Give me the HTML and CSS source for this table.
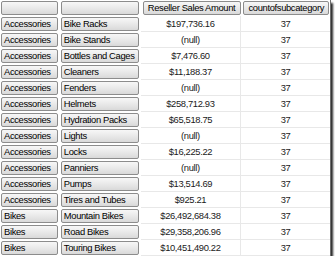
FILE: index.html
```html
<!DOCTYPE html>
<html>
<head>
<meta charset="utf-8">
<link rel="stylesheet" href="styles.css">
</head>
<body>
<div class="frame">
  <div class="row head">
    <div class="c1"><div class="btn"></div></div>
    <div class="c2"><div class="btn"></div></div>
    <div class="c3"><div class="btn center">Reseller Sales Amount</div></div>
    <div class="c4"><div class="btn center">countofsubcategory</div></div>
  </div>
  <div class="row"><div class="c1"><div class="btn">Accessories</div></div><div class="c2"><div class="btn">Bike Racks</div></div><div class="c3 val">$197,736.16</div><div class="c4 val">37</div></div>
  <div class="row"><div class="c1"><div class="btn">Accessories</div></div><div class="c2"><div class="btn">Bike Stands</div></div><div class="c3 val">(null)</div><div class="c4 val">37</div></div>
  <div class="row"><div class="c1"><div class="btn">Accessories</div></div><div class="c2"><div class="btn">Bottles and Cages</div></div><div class="c3 val">$7,476.60</div><div class="c4 val">37</div></div>
  <div class="row"><div class="c1"><div class="btn">Accessories</div></div><div class="c2"><div class="btn">Cleaners</div></div><div class="c3 val">$11,188.37</div><div class="c4 val">37</div></div>
  <div class="row"><div class="c1"><div class="btn">Accessories</div></div><div class="c2"><div class="btn">Fenders</div></div><div class="c3 val">(null)</div><div class="c4 val">37</div></div>
  <div class="row"><div class="c1"><div class="btn">Accessories</div></div><div class="c2"><div class="btn">Helmets</div></div><div class="c3 val">$258,712.93</div><div class="c4 val">37</div></div>
  <div class="row"><div class="c1"><div class="btn">Accessories</div></div><div class="c2"><div class="btn">Hydration Packs</div></div><div class="c3 val">$65,518.75</div><div class="c4 val">37</div></div>
  <div class="row"><div class="c1"><div class="btn">Accessories</div></div><div class="c2"><div class="btn">Lights</div></div><div class="c3 val">(null)</div><div class="c4 val">37</div></div>
  <div class="row"><div class="c1"><div class="btn">Accessories</div></div><div class="c2"><div class="btn">Locks</div></div><div class="c3 val">$16,225.22</div><div class="c4 val">37</div></div>
  <div class="row"><div class="c1"><div class="btn">Accessories</div></div><div class="c2"><div class="btn">Panniers</div></div><div class="c3 val">(null)</div><div class="c4 val">37</div></div>
  <div class="row"><div class="c1"><div class="btn">Accessories</div></div><div class="c2"><div class="btn">Pumps</div></div><div class="c3 val">$13,514.69</div><div class="c4 val">37</div></div>
  <div class="row"><div class="c1"><div class="btn">Accessories</div></div><div class="c2"><div class="btn">Tires and Tubes</div></div><div class="c3 val">$925.21</div><div class="c4 val">37</div></div>
  <div class="row"><div class="c1"><div class="btn">Bikes</div></div><div class="c2"><div class="btn">Mountain Bikes</div></div><div class="c3 val">$26,492,684.38</div><div class="c4 val">37</div></div>
  <div class="row"><div class="c1"><div class="btn">Bikes</div></div><div class="c2"><div class="btn">Road Bikes</div></div><div class="c3 val">$29,358,206.96</div><div class="c4 val">37</div></div>
  <div class="row"><div class="c1"><div class="btn">Bikes</div></div><div class="c2"><div class="btn">Touring Bikes</div></div><div class="c3 val">$10,451,490.22</div><div class="c4 val">37</div></div>
</div>
</body>
</html>
```
FILE: styles.css
```css
html, body {
  margin: 0;
  padding: 0;
  background: #ffffff;
}
body {
  font-family: "Liberation Sans", Arial, sans-serif;
  font-size: 9.4px;
  letter-spacing: -0.35px;
  color: #000000;
}
.frame {
  width: 330px;
  height: 256px;
  background: #ffffff;
  border-right: 1px solid #6e6e6e;
  box-shadow: 2px 3px 2px rgba(0, 0, 0, 0.85);
  overflow: hidden;
}
.row {
  display: flex;
  height: 16px;
}
.c1, .c2, .c3, .c4 {
  display: flex;
  align-items: center;
  box-sizing: border-box;
}
.c1 { width: 60px; padding-left: 1px; }
.c2 { width: 81px; padding-left: 1px; }
.c3 { width: 101px; padding-left: 2px; }
.c4 { width: 89px; padding-left: 2px; }
.c1 .btn { width: 57px; }
.c2 .btn { width: 78px; }
.c3 .btn { width: 98px; }
.c4 .btn { width: 86px; }
.btn {
  box-sizing: border-box;
  height: 14px;
  line-height: 12px;
  padding-left: 2px;
  border: 1px solid #8c8c8c;
  border-radius: 2px;
  background: linear-gradient(#f7f7f7, #e9e9e9 50%, #d9d9d9);
  white-space: nowrap;
  overflow: hidden;
}
.btn.center {
  text-align: center;
  padding-left: 0;
}
.val {
  justify-content: center;
  padding-left: 0;
  border-bottom: 1px solid #e8e8e8;
  color: #1a1a1a;
}
.c3.val {
  border-right: 1px solid #e8e8e8;
}
```
